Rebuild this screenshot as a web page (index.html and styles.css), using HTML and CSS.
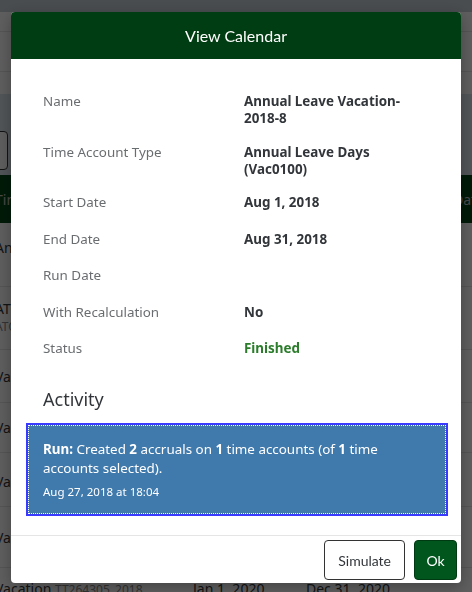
FILE: index.html
```html
<!DOCTYPE html>
<html lang="en">
  <head>
    <meta charset="UTF-8" />
    <meta name="viewport" content="width=device-width, initial-scale=1.0" />
    <title>Time Account Accruals</title>
    <link rel="stylesheet" href="styles.css">
  </head>
  <body>
    <div class="page">
      <div class="shell-bar"></div>
      <div class="sub-bar"></div>
      <div class="sub-bar tall"></div>
      <div class="filter-bar">
        <button class="ghost-button">Go</button>
      </div>

      <div class="table">
        <div class="table-head">
          <span>Time Account</span>
          <span class="right-cell">Date</span>
        </div>
        <div class="table-row first">Annual Leave</div>
        <div class="table-row two-line">
          <span>ATO Annual Leave</span>
          <span class="muted">ATO_2018</span>
        </div>
        <div class="table-row r3">Vacation</div>
        <div class="table-row r4">Vacation</div>
        <div class="table-row r5">Vacation</div>
        <div class="table-row r6">Vacation</div>
        <div class="table-row last">
          <span class="cell-name">Vacation <small>TT264305_2018</small></span>
          <span class="cell-date">Jan 1, 2020</span>
          <span class="cell-date">Dec 31, 2020</span>
        </div>
      </div>
    </div>

    <div class="overlay">
      <div class="dialog">
        <div class="dialog-header">View Calendar</div>

        <div class="dialog-body">
          <div class="details">
            <div class="label">Name</div>
            <div class="value">Annual Leave Vacation-2018-8</div>

            <div class="label">Time Account Type</div>
            <div class="value">Annual Leave Days (Vac0100)</div>

            <div class="label">Start Date</div>
            <div class="value">Aug 1, 2018</div>

            <div class="label">End Date</div>
            <div class="value">Aug 31, 2018</div>

            <div class="label">Run Date</div>
            <div class="value"></div>

            <div class="label">With Recalculation</div>
            <div class="value">No</div>

            <div class="label">Status</div>
            <div class="value success">Finished</div>
          </div>

          <h2 class="section-title">Activity</h2>

          <div class="activity-item">
            <p>
              <b>Run:</b> Created <b>2</b> accruals on <b>1</b> time accounts
              (of <b>1</b> time accounts selected).
            </p>
            <div class="timestamp">Aug 27, 2018 at 18:04</div>
          </div>
        </div>

        <div class="dialog-footer">
          <button class="btn">Simulate</button>
          <button class="btn primary">Ok</button>
        </div>
      </div>
    </div>
  </body>
</html>
```

FILE: styles.css
```css
* {
  margin: 0;
  padding: 0;
  box-sizing: border-box;
}

body {
  font-family: "Noto Sans", Arial, sans-serif;
  font-size: 13.4px;
  color: #32363a;
  background: #ffffff;
  overflow: hidden;
}

/* Page behind the dialog */
.page {
  width: 100%;
}

.shell-bar {
  height: 12px;
  background: #c8d0d8;
}

.sub-bar {
  height: 20px;
  border-bottom: 1px solid #e5e5e5;
}

.sub-bar.tall {
  height: 40px;
}

.filter-bar {
  height: 103px;
  background: #dde6ee;
  border-top: 22px solid #ffffff;
  padding-top: 37px;
}

.ghost-button {
  display: block;
  width: 40px;
  height: 39px;
  margin-left: -32px;
  border: 1px solid #333;
  border-radius: 4px;
  background: #ffffff;
  color: transparent;
}

.table {
  margin-left: -5px;
  font-size: 14px;
}

.table-head {
  height: 48px;
  background: #004616;
  color: #c8c8c8;
  display: flex;
  justify-content: space-between;
  align-items: center;
}

.right-cell {
  margin-right: -12px;
}

.table-row {
  height: 53px;
  border-bottom: 1px solid #e5e5e5;
  display: flex;
  flex-direction: column;
  justify-content: center;
  color: #32363a;
}

.table-row.first {
  height: 64px;
  padding-bottom: 14px;
}

.table-row.two-line {
  height: 63px;
  line-height: 18px;
}

.table-row.r4 {
  height: 50px;
}

.table-row.r5 {
  height: 54px;
  padding-top: 4px;
}

.table-row.r6 {
  height: 61px;
}

.table-row.last {
  flex-direction: row;
  justify-content: flex-start;
  align-items: center;
  height: 40px;
  border-bottom: none;
}

.muted,
.table-row small {
  color: #8a8a8a;
  font-size: 12px;
}

.cell-name {
  width: 198px;
}

.cell-date {
  width: 113px;
}

/* Dialog */
.overlay {
  position: fixed;
  inset: 0;
  background: rgba(0, 0, 0, 0.63);
  display: flex;
  justify-content: center;
  padding-top: 12px;
}

.dialog {
  width: 450px;
  height: 571px;
  background: #ffffff;
  border-radius: 4px;
  overflow: hidden;
  display: flex;
  flex-direction: column;
  box-shadow: 0 4px 16px rgba(0, 0, 0, 0.3);
}

.dialog-header {
  height: 47px;
  background: #013d12;
  color: #ffffff;
  font-family: Lato, "Noto Sans", sans-serif;
  font-size: 16px;
  display: flex;
  align-items: center;
  justify-content: center;
  padding-bottom: 1px;
}

.dialog-body {
  flex: 1;
  padding: 34px 13px 0 15px;
}

.details {
  display: grid;
  grid-template-columns: 201px 1fr;
  grid-auto-rows: minmax(20px, auto);
  row-gap: 16.5px;
  padding: 0 40px 0 17px;
  line-height: 17px;
}

.label {
  color: #6a6d70;
}

.value {
  font-weight: bold;
  color: #32363a;
}

.value.success {
  color: #2b7d2b;
}

.section-title {
  font-size: 18px;
  font-weight: normal;
  line-height: 24px;
  margin: 27px 0 12px 17px;
  color: #32363a;
}

.activity-item {
  position: relative;
  background: #4079ab;
  color: #ffffff;
  border: 2px solid #3a3aff;
  padding: 15px 15px 14px;
}

.activity-item::after {
  content: "";
  position: absolute;
  inset: 0;
  border: 1px dotted #ffffff;
  pointer-events: none;
}

.activity-item p {
  line-height: 19.3px;
}

.timestamp {
  font-size: 11.5px;
  line-height: 16px;
  margin-top: 5px;
}

.dialog-footer {
  border-top: 1px solid #e5e5e5;
  display: flex;
  justify-content: flex-end;
  gap: 9px;
  padding: 4px 4px 3px;
}

.btn {
  height: 40px;
  padding: 0 13px;
  font-family: Lato, "Noto Sans", sans-serif;
  font-size: 14px;
  color: #32363a;
  background: #ffffff;
  border: 1px solid #333333;
  border-radius: 4px;
}

.btn.primary {
  width: 43px;
  padding: 0;
  background: #00561c;
  border-color: #003a12;
  color: #ffffff;
}
```
